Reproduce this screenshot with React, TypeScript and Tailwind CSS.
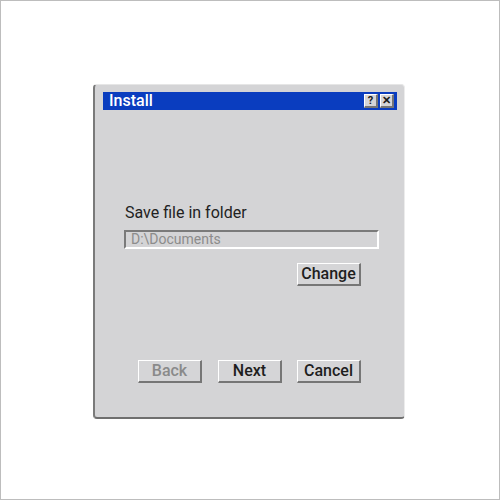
import React from "react";

const raised =
  "border-t border-l border-t-white border-l-white border-b-2 border-r-2 border-b-[#767676] border-r-[#767676] bg-[#d5d5d7]";

const DialogButton: React.FC<{ label: string; disabled?: boolean; className?: string }> = ({
  label,
  disabled,
  className = "",
}) => (
  <button
    className={`w-[64px] h-[23px] flex items-center justify-center text-[16px] font-medium leading-none ${raised} ${
      disabled ? "text-[#8a8a8a]" : "text-[#1e1e1e]"
    } ${className}`}
  >
    {label}
  </button>
);

const TitleButton: React.FC<{ children: React.ReactNode }> = ({ children }) => (
  <div
    className={`w-[14px] h-[14px] flex items-center justify-center text-[11px] font-bold leading-none text-[#1a1a1a] ${raised}`}
  >
    {children}
  </div>
);

const App: React.FC = () => {
  return (
    <div
      className="w-[500px] h-[500px] bg-white border border-[#bdbdbd] flex items-center justify-center"
      style={{ fontFamily: "Roboto, 'Liberation Sans', sans-serif" }}
    >
      <div className="mr-[2px] mt-[2px] w-[312px] h-[335px] bg-[#d4d4d6] rounded-[4px] border-t border-r border-t-[#e6e6e6] border-r-[#ececec] border-l-2 border-b-2 border-l-[#7a7a7a] border-b-[#6f6f6f] pt-[7px] pl-[8px] pr-[7px] flex flex-col">
        {/* title bar */}
        <div className="h-[18px] bg-[#0a3dbf] flex items-center justify-between pl-[6px] pr-[3px]">
          <span className="text-white text-[16px] font-medium leading-none">
            Install
          </span>
          <div className="flex gap-[2px]">
            <TitleButton>?</TitleButton>
            <TitleButton>✕</TitleButton>
          </div>
        </div>

        {/* body */}
        <div className="flex flex-col pl-[21px] pr-[18px] mt-[93px]">
          <div className="text-[16px] leading-[19px] text-[#222] pl-[1px]">
            Save file in folder
          </div>
          <div className="mt-[8px] w-[255px] h-[19px] border-t-2 border-l-2 border-t-[#7a7a7a] border-l-[#7a7a7a] border-b-2 border-r-2 border-b-white border-r-white flex items-center pl-[5px] text-[14px] text-[#8c8c8c] leading-none">
            D:\Documents
          </div>
          <div className="mt-[14px] flex justify-end pr-[18px]">
            <DialogButton label="Change" />
          </div>
          <div className="mt-[74px] flex justify-end gap-[15px] pr-[18px]">
            <DialogButton label="Back" disabled className="mr-[1px]" />
            <DialogButton label="Next" />
            <DialogButton label="Cancel" />
          </div>
        </div>
      </div>
    </div>
  );
};

export default App;
